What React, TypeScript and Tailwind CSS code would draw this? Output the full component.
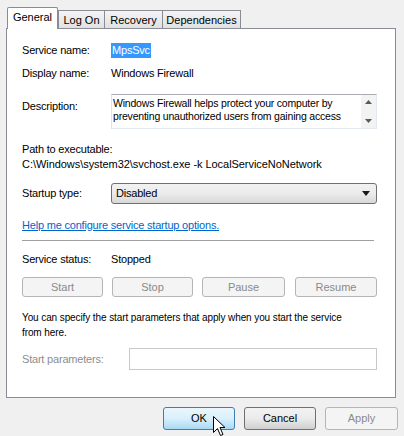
import React from 'react';

const tabs = ['General', 'Log On', 'Recovery', 'Dependencies'];

const Label: React.FC<{ children: React.ReactNode; className?: string }> = ({ children, className = '' }) => (
  <div className={`w-[89px] shrink-0 ${className}`}>{children}</div>
);

const DisabledButton: React.FC<{ label: string; w: string }> = ({ label, w }) => (
  <div className={`${w} h-[20px] flex items-center justify-center border border-[#b5b5b5] rounded-[3px] bg-[#f4f4f4] text-[#8a8a8a]`}>
    {label}
  </div>
);

const Cursor = () => (
  <svg className="absolute left-[213px] top-[416px]" width="13" height="21" viewBox="0 0 13 21">
    <path d="M0.5 0.5 L0.5 16.5 L4.5 12.5 L7.5 19.5 L10 18.5 L7 11.5 L12 11.5 Z" fill="#fff" stroke="#000" strokeWidth="1" strokeLinejoin="miter" />
  </svg>
);

export default function App() {
  return (
    <div className="relative w-[404px] h-[436px] overflow-hidden bg-[#f0f0f0] text-[11px] leading-[13px] tracking-[-0.2px] text-black [font-family:'Liberation_Sans',Arial,sans-serif]">
      {/* tab strip */}
      <div className="flex items-end pl-[7px] pt-[7px] h-[28px] tracking-normal">
        {tabs.map((t, i) =>
          i === 0 ? (
            <div key={t} className="relative z-10 h-[22px] w-[51px] -mb-px bg-white border border-b-0 border-[#898c95] rounded-t-[2px] flex items-center justify-center pb-[2px]">
              {t}
            </div>
          ) : (
            <div
              key={t}
              className={`h-[18px] -ml-px border border-b-0 border-[#898c95] bg-gradient-to-b from-[#f4f4f4] to-[#e1e1e1] flex items-center justify-center pt-[2px] ${
                i === 1 ? 'w-[47px] ml-0' : i === 2 ? 'w-[59px]' : 'w-[79px]'
              }`}
            >
              {t}
            </div>
          )
        )}
      </div>

      {/* page */}
      <div className="ml-[6px] w-[390px] h-[370px] bg-white border border-[#898c95] pl-[15px] pr-[18px]">
        <div className="flex items-center h-[16px] mt-[13px]">
          <Label>Service name:</Label>
          <span className="bg-[#3399ff] text-white px-[1px] h-[15px] leading-[15px]">MpsSvc</span>
        </div>

        <div className="flex items-center h-[16px] mt-[7px]">
          <Label>Display name:</Label>
          <span>Windows Firewall</span>
        </div>

        <div className="flex mt-[13px]">
          <Label className="pt-[6px]">Description:</Label>
          <div className="flex w-[267px] h-[35px] border border-[#abadb3] border-r-[#e3e9ef] border-b-[#e3e9ef] border-l-[#e2e3ea]">
            <div className="flex-1 pl-[1px] pt-[2px] text-[10.5px] leading-[12.5px] overflow-hidden">
              Windows Firewall helps protect your computer by
              <br />
              preventing unauthorized users from gaining access
            </div>
            <div className="w-[15px] bg-[#f3f3f3] flex flex-col items-center justify-between py-[5px]">
              <svg width="7" height="4" viewBox="0 0 7 4"><path d="M0 4 L3.5 0 L7 4 Z" fill="#5a5a5a" /></svg>
              <svg width="7" height="4" viewBox="0 0 7 4"><path d="M0 0 L3.5 4 L7 0 Z" fill="#5a5a5a" /></svg>
            </div>
          </div>
        </div>

        <div className="mt-[14px] h-[13px]">Path to executable:</div>
        <div className="mt-[2px] h-[13px] tracking-[-0.05px]">C:\Windows\system32\svchost.exe -k LocalServiceNoNetwork</div>

        <div className="flex items-center mt-[12px]">
          <Label>Startup type:</Label>
          <div className="w-[266px] h-[21px] flex items-center justify-between border border-[#707070] rounded-[3px] bg-gradient-to-b from-[#f2f2f2] via-[#ebebeb] to-[#d8d8d8] pl-[4px] pr-[6px]">
            <span>Disabled</span>
            <svg width="8" height="5" viewBox="0 0 8 5"><path d="M0 0 L8 0 L4 5 Z" fill="#1a1a1a" /></svg>
          </div>
        </div>

        <div className="mt-[15px] h-[13px]">
          <span className="text-[#0066cc] underline underline-offset-[1px] decoration-[#0066cc]">Help me configure service startup options.</span>
        </div>

        <div className="mt-[8px] h-px w-[352px] bg-[#a0a0a0]" />

        <div className="flex items-center h-[13px] mt-[12px]">
          <Label>Service status:</Label>
          <span>Stopped</span>
        </div>

        <div className="flex mt-[11px] gap-[9px] tracking-normal">
          <DisabledButton label="Start" w="w-[81px]" />
          <DisabledButton label="Stop" w="w-[81px]" />
          <DisabledButton label="Pause" w="w-[83px]" />
          <div className="ml-[1px]">
            <DisabledButton label="Resume" w="w-[82px]" />
          </div>
        </div>

        <div className="mt-[13px] text-[10px] leading-[15px] tracking-[-0.1px] whitespace-nowrap">
          You can specify the start parameters that apply when you start the service
          <br />
          from here.
        </div>

        <div className="flex items-center mt-[8px]">
          <div className="w-[107px] shrink-0 text-[#8d8d8d]">Start parameters:</div>
          <div className="w-[249px] h-[22px] border border-[#c9c9c9] bg-white" />
        </div>
      </div>

      {/* dialog buttons */}
      <div className="flex mt-[9px] pl-[163px] gap-[9px] tracking-normal">
        <div className="w-[72px] h-[23px] flex items-center justify-center border border-[#3c7fb1] rounded-[3px] bg-gradient-to-b from-[#eaf6fd] via-[#d9f0fc] to-[#a7d9f5]">
          OK
        </div>
        <div className="w-[72px] h-[23px] flex items-center justify-center border border-[#707070] rounded-[3px] bg-gradient-to-b from-[#f2f2f2] via-[#ebebeb] to-[#cfcfcf]">
          Cancel
        </div>
        <div className="w-[73px] h-[23px] flex items-center justify-center border border-[#b5b5b5] rounded-[3px] bg-[#f4f4f4] text-[#8a8a8a]">
          Apply
        </div>
      </div>

      <Cursor />
    </div>
  );
}
